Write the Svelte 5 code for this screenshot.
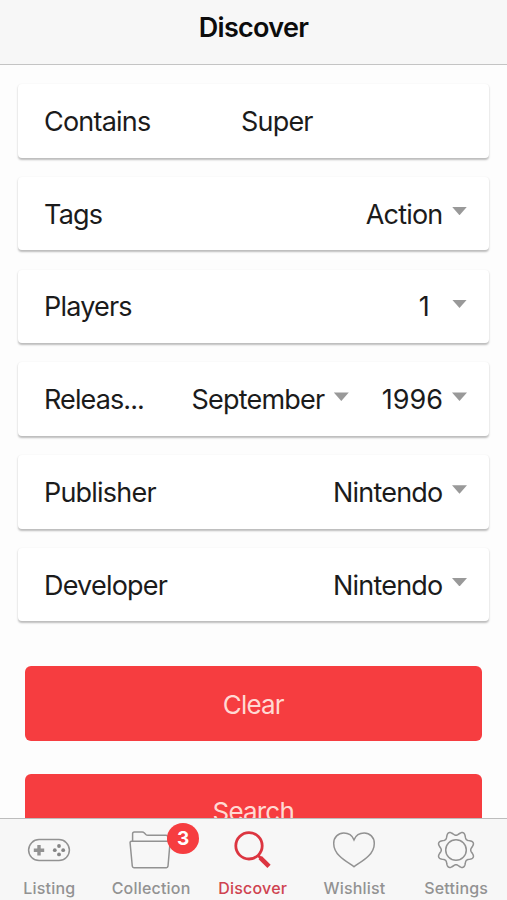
<script>
	let active = 'Discover';
	let contains = 'Super';

	const tabs = [
		{ name: 'Listing' },
		{ name: 'Collection', badge: 3 },
		{ name: 'Discover' },
		{ name: 'Wishlist' },
		{ name: 'Settings' }
	];

	const filters = [
		{ label: 'Tags', values: ['Action'] },
		{ label: 'Players', values: ['1'] },
		{ label: 'Releas...', values: ['September', '1996'] },
		{ label: 'Publisher', values: ['Nintendo'] },
		{ label: 'Developer', values: ['Nintendo'] }
	];

	// eight-toothed cog outline
	function gear(cx, cy) {
		let points = [];
		for (let i = 0; i < 160; i++) {
			const a = (i / 160) * Math.PI * 2;
			const r = 14.7 + 4 * Math.pow((1 - Math.cos(8 * a)) / 2, 1.1);
			points.push((cx + r * Math.cos(a)).toFixed(2) + ' ' + (cy + r * Math.sin(a)).toFixed(2));
		}
		return 'M' + points.join('L') + 'Z';
	}
</script>

<div class="app">
	<header><h1>Discover</h1></header>

	<main>
		<div class="cards">
			<div class="card">
				<span class="label">Contains</span>
				<input type="text" aria-label="Contains" bind:value={contains} />
			</div>
			{#each filters as filter}
				<div class="card">
					<span class="label" class:short={filter.values.length > 1}>{filter.label}</span>
					<div class="values">
						{#each filter.values as value}
							<div class="select" class:single={value.length === 1} class:year={value.length === 4}>
								<span class="value">{value}</span>
								<i class="arrow"></i>
							</div>
						{/each}
					</div>
				</div>
			{/each}
		</div>
		<div class="buttons">
			<button>Clear</button>
			<button>Search</button>
		</div>
	</main>

	<nav>
		{#each tabs as tab}
			<button class="tab" class:active={tab.name === active} on:click={() => (active = tab.name)}>
				<svg width="48" height="44" viewBox="0 0 48 44">
					{#if tab.name === 'Listing'}
						<rect x="3.6" y="11.6" width="40.8" height="21" rx="10.5" />
						<path class="thick" d="M14 17v10.4M8.8 22.2h10.4" />
						<g class="solid">
							<circle cx="34" cy="18" r="1.9" />
							<circle cx="34" cy="26.4" r="1.9" />
							<circle cx="29.8" cy="22.2" r="1.9" />
							<circle cx="38.2" cy="22.2" r="1.9" />
						</g>
					{:else if tab.name === 'Collection'}
						<path d="M5.6 13V5.8Q5.6 4 7.4 4H15.2Q16.4 4 17.4 5L18.8 6.5Q19.6 7.3 21 7.3H39Q40.8 7.3 40.8 9.1V13" />
						<path d="M4.5 13.3H41.7Q43.2 13.3 43 15L41 38.2Q40.8 39.7 39.4 39.7H6.9Q5.5 39.7 5.3 38.2L3.1 15Q2.9 13.3 4.5 13.3Z" />
					{:else if tab.name === 'Discover'}
						<circle class="lens" cx="20" cy="17.8" r="13.2" />
						<path class="lens" d="M29.2 27.6L31.8 30.2" />
						<path class="handle" d="M31.2 29.6L40 38.4" />
					{:else if tab.name === 'Wishlist'}
						<path d="M24 38.7C20.5 35.4 3.7 28.6 3.7 15.4C3.7 9 8.2 5.1 13.8 5.1C18.6 5.1 22.3 7.8 24 11.9C25.7 7.8 29.4 5.1 34.2 5.1C39.8 5.1 44.3 9 44.3 15.4C44.3 28.6 27.5 35.4 24 38.7Z" />
					{:else}
						<path d={gear(24, 22)} />
						<circle cx="24" cy="22" r="10.3" />
					{/if}
				</svg>
				{#if tab.badge}
					<span class="badge">{tab.badge}</span>
				{/if}
				<span class="name">{tab.name}</span>
			</button>
		{/each}
	</nav>
</div>

<style>
:global(body) {
	margin: 0;
}
.app {
	display: flex;
	flex-direction: column;
	height: 900px;
	overflow: hidden;
	background: #fdfdfd;
	color: #1b1b1b;
	font-family: Inter, 'Liberation Sans', sans-serif;
	font-size: 27px;
}
header {
	box-sizing: border-box;
	height: 65px;
	flex: none;
	padding-top: 10px;
	background: #f7f7f7;
	border-bottom: 1px solid #c4c4c4;
}
h1 {
	margin: 0;
	font-size: 27px;
	line-height: 35px;
	font-weight: 600;
	letter-spacing: -0.7px;
	text-align: center;
	color: #0c0c0c;
}
main {
	flex: 1;
	min-height: 0;
	overflow: hidden;
}
.cards {
	display: flex;
	flex-direction: column;
	gap: 19.3px;
	padding: 19px 18.5px 0 18px;
}
.card {
	box-sizing: border-box;
	display: flex;
	align-items: center;
	height: 73.5px;
	padding: 2px 21.5px 0 26px;
	border-radius: 4px;
	background: #fff;
	box-shadow: 0 1.5px 2px rgba(0, 0, 0, 0.26);
}
.label {
	flex: none;
	width: 197px;
	letter-spacing: -0.8px;
	line-height: 36px;
}
.label.short {
	width: 104px;
	letter-spacing: -0.9px;
}
input {
	width: 200px;
	padding: 0;
	border: 0;
	outline: 0;
	background: none;
	color: inherit;
	font: inherit;
	letter-spacing: -0.8px;
}
.values {
	flex: 1;
	display: flex;
	justify-content: flex-end;
	gap: 33px;
}
.select {
	display: flex;
	align-items: center;
	gap: 9.5px;
	letter-spacing: -0.8px;
	line-height: 36px;
}
.select.single {
	gap: 23px;
}
.select.year {
	gap: 9px;
	letter-spacing: 0;
}
.arrow {
	width: 15px;
	height: 8.5px;
	margin-top: -7px;
	background: #999;
	clip-path: polygon(0 0, 100% 0, 50% 100%);
}
.buttons {
	display: flex;
	flex-direction: column;
	gap: 33px;
	padding: 45px 25px 0 24.5px;
}
.buttons button {
	flex: none;
	height: 74.5px;
	padding: 1px 0 0;
	border: 0;
	border-radius: 6px;
	background: #f63d40;
	color: #ffd9d3;
	font: inherit;
	font-size: 26px;
	letter-spacing: -0.8px;
}
nav {
	box-sizing: border-box;
	flex: none;
	display: flex;
	height: 82px;
	margin-left: -1.5px;
	border-top: 1px solid #bdbdbd;
	background: #f7f7f7;
}
.tab {
	position: relative;
	flex: 1 1 0;
	min-width: 0;
	display: flex;
	flex-direction: column;
	align-items: center;
	padding: 9px 0 0;
	border: 0;
	background: none;
	color: #929292;
	font: 500 16px Inter, 'Liberation Sans', sans-serif;
}
svg {
	flex: none;
	fill: none;
	stroke: #929292;
	stroke-width: 1.5;
}
.thick {
	stroke-width: 3.4;
}
.solid {
	fill: #858585;
	stroke: none;
}
.lens,
.handle {
	stroke: #dc3540;
	stroke-width: 2.8;
}
.handle {
	stroke-width: 4.6;
}
.name {
	margin-top: 6px;
	line-height: 20px;
	letter-spacing: 0.2px;
}
.active .name {
	color: #cf4350;
}
.badge {
	position: absolute;
	top: 4px;
	left: 67px;
	width: 32px;
	height: 31px;
	border-radius: 50%;
	background: #f63d40;
	color: #fff;
	font-size: 19px;
	font-weight: 700;
	line-height: 31px;
	text-align: center;
}
</style>
